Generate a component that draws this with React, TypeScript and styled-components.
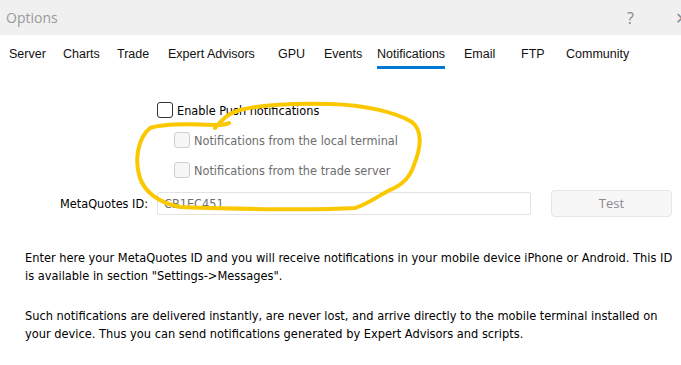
import styled, { createGlobalStyle } from "styled-components";

const GlobalStyle = createGlobalStyle`
  body {
    margin: 0;
    background: #fff;
    font-family: "Liberation Sans", Arial, sans-serif;
  }
`;

const Window = styled.div`
  position: relative;
  width: 681px;
  height: 365px;
  overflow: hidden;
  background: #fff;
`;

const TitleBar = styled.div`
  display: flex;
  align-items: center;
  height: 35px;
  padding-left: 6px;
  background: #f0f0f0;
  color: #9a9a9a;
  font-family: "Open Sans", sans-serif;
  font-size: 14px;
`;

const Title = styled.div`
  flex: 1;
`;

const TitleButton = styled.div<{ $w: number }>`
  width: ${(p) => p.$w}px;
  overflow: hidden;
  font-size: 16px;
  color: #8a8a8a;
`;

const TabBar = styled.div`
  display: flex;
  padding: 12px 0 0 9px;
  height: 24px;
`;

const Tab = styled.div<{ $w: number; $active?: boolean }>`
  width: ${(p) => p.$w}px;
  flex-shrink: 0;
  font-size: 12.5px;
  color: #111;
  span {
    display: inline-block;
    padding-bottom: 5px;
    border-bottom: 3px solid ${(p) => (p.$active ? "#0078d4" : "transparent")};
  }
`;

const Body = styled.div`
  display: flex;
  flex-direction: column;
  padding-top: 31px;
`;

const CheckRow = styled.label<{ $indent: number; $muted?: boolean }>`
  display: flex;
  align-items: center;
  gap: 4px;
  height: 16px;
  margin: 0 0 14px ${(p) => p.$indent}px;
  font-family: "DejaVu Sans Condensed", "DejaVu Sans", sans-serif;
  font-size: 12.6px;
  color: ${(p) => (p.$muted ? "#6d6d6d" : "#000")};
`;

const Box = styled.span<{ $muted?: boolean }>`
  box-sizing: border-box;
  width: 16px;
  height: 16px;
  border-radius: 3px;
  border: 1px solid ${(p) => (p.$muted ? "#cfcfcf" : "#333")};
  background: ${(p) => (p.$muted ? "#f7f7f7" : "#fff")};
`;

const IdRow = styled.div`
  display: flex;
  align-items: center;
  margin-top: -2px;
  height: 26px;
  font-family: "DejaVu Sans Condensed", "DejaVu Sans", sans-serif;
  font-size: 12.6px;
`;

const IdLabel = styled.div`
  width: 148px;
  text-align: right;
  margin-right: 9px;
  color: #000;
`;

const IdInput = styled.div`
  box-sizing: border-box;
  width: 374px;
  height: 23px;
  padding-left: 6px;
  display: flex;
  align-items: center;
  border: 1px solid #e3e3e3;
  border-radius: 2px;
  color: #6d6d6d;
`;

const TestButton = styled.div`
  box-sizing: border-box;
  width: 121px;
  height: 27px;
  margin-left: 20px;
  display: flex;
  align-items: center;
  justify-content: center;
  background: #f7f7f7;
  border: 1px solid #e6e6e6;
  border-radius: 4px;
  color: #8a8a8a;
  font-size: 13px;
  font-family: "Open Sans", sans-serif;
`;

const Para = styled.p`
  margin: 0 0 0 25px;
  font-family: "DejaVu Sans Condensed", "DejaVu Sans", sans-serif;
  font-size: 12.7px;
  line-height: 18px;
  color: #000;
  white-space: nowrap;
`;

const Spacer = styled.div<{ $h: number }>`
  height: ${(p) => p.$h}px;
`;

const Scribble = styled.svg`
  position: absolute;
  left: 0;
  top: 0;
  pointer-events: none;
`;

const tabs = [
  { label: "Server", w: 54 },
  { label: "Charts", w: 54 },
  { label: "Trade", w: 51 },
  { label: "Expert Advisors", w: 110 },
  { label: "GPU", w: 46 },
  { label: "Events", w: 53 },
  { label: "Notifications", w: 87, active: true },
  { label: "Email", w: 57 },
  { label: "FTP", w: 45 },
  { label: "Community", w: 90 },
];

function App() {
  return (
    <Window>
      <GlobalStyle />
      <TitleBar>
        <Title>Options</Title>
        <TitleButton $w={48}>?</TitleButton>
        <TitleButton $w={6}>✕</TitleButton>
      </TitleBar>
      <TabBar>
        {tabs.map((t) => (
          <Tab key={t.label} $w={t.w} $active={t.active}>
            <span>{t.label}</span>
          </Tab>
        ))}
      </TabBar>
      <Body>
        <CheckRow $indent={157}>
          <Box />
          Enable Push notifications
        </CheckRow>
        <CheckRow $indent={174} $muted>
          <Box $muted />
          Notifications from the local terminal
        </CheckRow>
        <CheckRow $indent={174} $muted>
          <Box $muted />
          Notifications from the trade server
        </CheckRow>
        <IdRow>
          <IdLabel>MetaQuotes ID:</IdLabel>
          <IdInput>CB1EC451</IdInput>
          <TestButton>Test</TestButton>
        </IdRow>
        <Spacer $h={33} />
        <Para>
          Enter here your MetaQuotes ID and you will receive notifications in your mobile device iPhone or Android. This ID
          <br />
          is available in section "Settings-&gt;Messages".
        </Para>
        <Spacer $h={22} />
        <Para>
          Such notifications are delivered instantly, are never lost, and arrive directly to the mobile terminal installed on
          <br />
          your device. Thus you can send notifications generated by Expert Advisors and scripts.
        </Para>
      </Body>
      <Scribble width="681" height="365" viewBox="0 0 681 365">
        <path
          d="M 215 128 C 222 120, 228 113, 240 110 C 265 104, 300 103, 330 104 C 365 105, 395 112, 412 122 C 424 132, 420 150, 414 165 C 410 178, 400 186, 390 190 C 378 196, 368 204, 355 208 C 320 210, 240 209, 180 207 C 160 203, 145 193, 140 178 C 134 160, 138 138, 150 128 C 165 123, 195 124, 214 125 C 220 125, 226 125, 229 123"
          fill="none"
          stroke="#fbc800"
          strokeWidth="4"
          strokeLinecap="round"
          strokeLinejoin="round"
        />
      </Scribble>
    </Window>
  );
}

export default App;
